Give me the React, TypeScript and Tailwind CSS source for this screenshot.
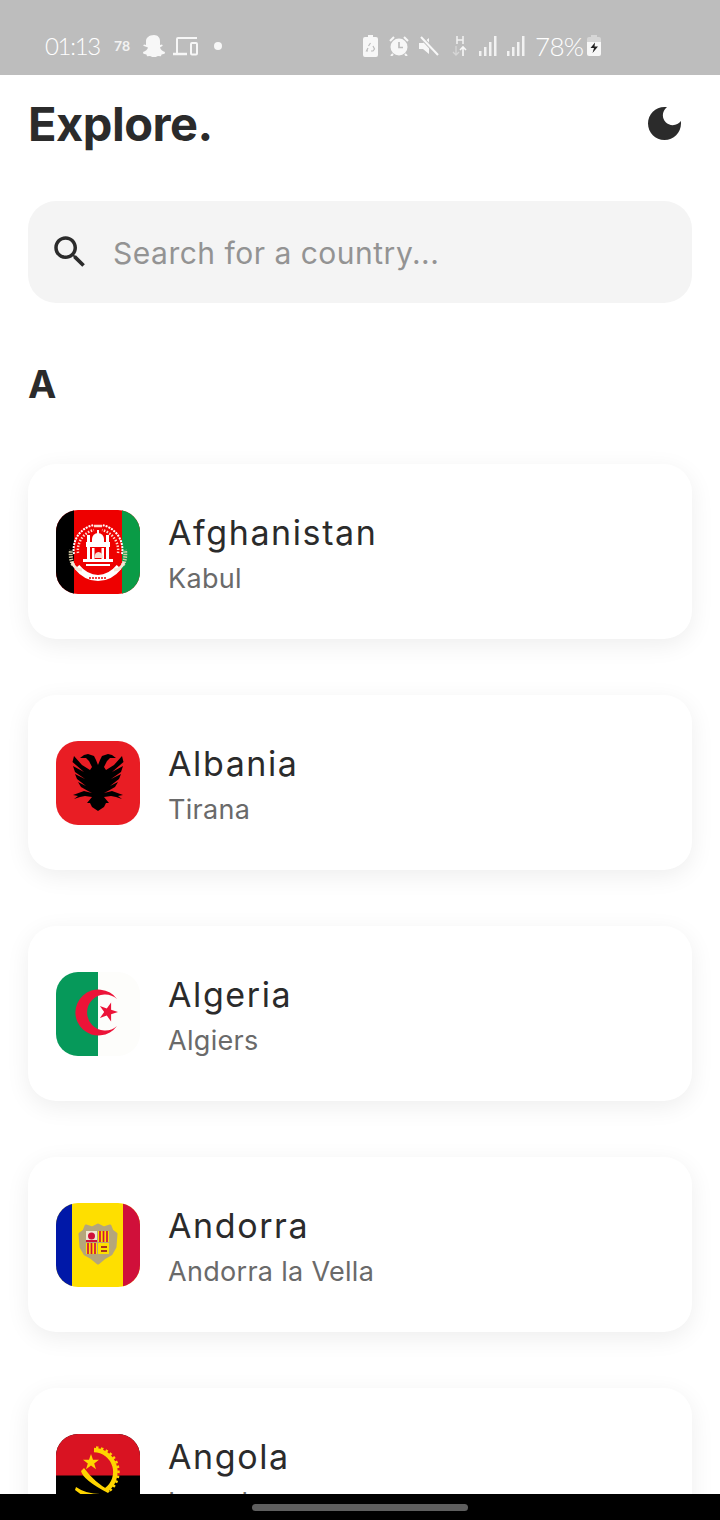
import React from "react";

const INK = "#2b2b2b";

function AfghanFlag() {
  return (
    <svg viewBox="0 0 84 84" className="w-full h-full block">
      <rect width="84" height="84" fill="#ee0000" />
      <rect width="18" height="84" fill="#000" />
      <rect x="66" width="18" height="84" fill="#0a9b46" />
      <g fill="none" strokeLinecap="butt">
        <path d="M17 55A27 27 0 0 1 15 40" strokeWidth="4" stroke="#d8cfa8" strokeDasharray="1.500 1" />
        <path d="M67 55A27 27 0 0 0 69 40" strokeWidth="4" stroke="#d8cfa8" strokeDasharray="1.500 1" />
        <path d="M18 44A25 25 0 0 1 38 15" strokeWidth="2" stroke="#fff" strokeDasharray="2 1" />
        <path d="M66 44A25 25 0 0 0 46 15" strokeWidth="2" stroke="#fff" strokeDasharray="2 1" />
        <path d="M22 43A21 21 0 0 1 38 20" strokeWidth="2.500" stroke="#ffd8cc" strokeDasharray="1.500 1.500" />
        <path d="M62 43A21 21 0 0 0 46 20" strokeWidth="2.500" stroke="#ffd8cc" strokeDasharray="1.500 1.500" />
        <path d="M38 16h8" strokeWidth="2.500" stroke="#ffd8cc" />
        <path d="M21 57Q30 68 42 68T63 57" strokeWidth="6" stroke="#fff" />
        <path d="M33 68h18" strokeWidth="1.300" stroke="#ee0000" strokeDasharray="2 1" />
        <path d="M16 52Q19 60 26 60M68 52Q65 60 58 60" strokeWidth="3" stroke="#f3e7d8" />
      </g>
      <g fill="#fff">
        <rect x="31" y="25" width="3" height="24" />
        <rect x="50" y="25" width="3" height="24" />
        <path d="M36 32v-3a6 6 0 0 1 12 0v3z" />
        <rect x="30" y="32" width="24" height="5" />
        <rect x="36" y="38" width="2.500" height="11" />
        <rect x="45.500" y="38" width="2.500" height="11" />
        <rect x="27" y="49" width="30" height="3" />
        <rect x="30" y="54" width="24" height="2" />
        <path d="M38.500 48q0-6 4-6t4.500 6z" fill="#f6dccf" />
      </g>
      <rect x="41" y="20" width="2" height="4" fill="#fff" />
    </svg>
  );
}

function AlbaniaFlag() {
  const half =
    "M42 24L44 19L46 15L52 13L56 14L60 17L54 17L51 20L48 26L50 29L58 24L66 15L67.500 21L56 31L67 25L65 31L55 38L65 33L63 38L54 45L62 41L59 46L52 50L48 52L56 50L67 54L62 55L66 58L60 56L55 55L48 56L53 62L50 62L48 66L42 70Z";
  return (
    <svg viewBox="0 0 84 84" className="w-full h-full block">
      <rect width="84" height="84" fill="#e91d24" />
      <path d={half} fill="#000" />
      <path d={half} fill="#000" transform="matrix(-1 0 0 1 84 0)" />
    </svg>
  );
}

function AlgeriaFlag() {
  return (
    <svg viewBox="0 0 84 84" className="w-full h-full block">
      <rect width="84" height="84" fill="#fdfdfb" />
      <rect width="42" height="84" fill="#06995a" />
      <path d="M61 27A23 23 0 1 0 61 54A18 18 0 1 1 61 27Z" fill="#ec1338" />
      <path d="M62 40L55.100 42.200L55.100 49.500L50.800 43.600L43.900 45.900L48.200 40L43.900 34.100L50.800 36.400L55.100 30.500L55.100 37.800Z" fill="#ec1338" />
    </svg>
  );
}

function AndorraFlag() {
  return (
    <svg viewBox="0 0 84 84" className="w-full h-full block">
      <rect width="84" height="84" fill="#fedf00" />
      <rect width="16" height="84" fill="#0018a8" />
      <rect x="67" width="17" height="84" fill="#d0103a" />
      <path
        d="M30 23L36 25L42 22L48 25L54 23L56 28L60 31L59 44L55 51L48 55L42 60L36 55L29 51L25 44L24 31L28 28Z"
        fill="#b5a67a"
        stroke="#b5a67a"
        strokeWidth="3"
        strokeLinejoin="round"
      />
      <rect x="30" y="28" width="11" height="11" fill="#efe8d2" />
      <circle cx="35.500" cy="33" r="3.500" fill="#d0103a" />
      <rect x="30" y="37" width="11" height="2" fill="#d0103a" />
      <rect x="42" y="28" width="11" height="11" fill="#fedf00" />
      <path d="M44 28v11M47.500 28v11M51 28v11" stroke="#d0103a" strokeWidth="1.700" />
      <rect x="30" y="40" width="11" height="11" fill="#fedf00" />
      <path d="M32 40v11M35.500 40v11M39 40v11" stroke="#d0103a" strokeWidth="1.700" />
      <rect x="42" y="40" width="11" height="11" fill="#fedf00" />
      <path d="M45 43h6v2h-6zM45 47h6v2h-6z" fill="#a8341c" />
    </svg>
  );
}

function AngolaFlag() {
  return (
    <svg viewBox="0 0 84 84" className="w-full h-full block">
      <rect width="84" height="84" fill="#000" />
      <rect width="84" height="41.500" fill="#d91322" />
      <path d="M35 20L37 25.800L43 25.800L38.200 29.400L40 35.200L35 31.600L30 35.200L31.800 29.400L27 25.800L33 25.800Z" fill="#ffd500" />
      <path d="M38 16A22 22 0 0 1 50 56" fill="none" stroke="#ffd500" strokeWidth="4.500" />
      <path d="M40 13.500A24.500 24.500 0 0 1 52 58" fill="none" stroke="#ffd500" strokeWidth="2.500" strokeDasharray="2.500 2.500" />
      <path d="M25 37Q27 46 52 59L54 57Q38 48 28 34Z" fill="#ffd500" />
      <path d="M20 53Q30 60 44 60L48 66Q30 66 19 56Z" fill="#ffd500" />
    </svg>
  );
}

const COUNTRIES = [
  { name: "Afghanistan", capital: "Kabul", Flag: AfghanFlag },
  { name: "Albania", capital: "Tirana", Flag: AlbaniaFlag },
  { name: "Algeria", capital: "Algiers", Flag: AlgeriaFlag },
  { name: "Andorra", capital: "Andorra la Vella", Flag: AndorraFlag },
  { name: "Angola", capital: "Luanda", Flag: AngolaFlag },
];

function StatusBar() {
  return (
    <div className="h-[75px] bg-[#bdbdbd] flex items-center justify-between pl-[45px] pr-[119px] pt-[16px] text-white shrink-0 [font-family:Lato,sans-serif]">
      <div className="flex items-center">
        <span className="text-[24px] font-light w-[55px] leading-none tracking-[-1.300px]">01:13</span>
        <span className="text-[14px] font-bold ml-[14px] w-[16px] leading-none text-[#f2f2f2]">78</span>
        <svg viewBox="0 0 22 22" className="w-[22px] h-[22px] ml-[13px]" fill="#f7f7f7">
          <path d="M11 0c4 0 6 3 6 6v4l2-.5.8 1.300-2.800 1.600c.6 2 2.400 3.800 5 4.600l-.4 1.800-3 .7-.7 1.700-3-.3c-1.300.4-2.400 1.600-3.900 1.600s-2.600-1.200-3.900-1.600l-3 .3-.7-1.700-3-.7-.4-1.800c2.600-.8 4.400-2.600 5-4.600L.2 10.800 1 9.500l2 .5V6c0-3 3-6 8-6z" />
        </svg>
        <svg viewBox="0 0 25 20" className="w-[25px] h-[20px] ml-[8px]" fill="none" stroke="#f7f7f7" strokeWidth="2">
          <path d="M24 2H5a1 1 0 0 0-1 1v14" />
          <path d="M0 18h14" strokeWidth="2.500" />
          <rect x="18" y="7" width="6" height="11.500" rx="1" />
        </svg>
        <span className="w-[8px] h-[8px] rounded-full bg-[#f7f7f7] ml-[16px]" />
      </div>
      <div className="flex items-center">
        <svg viewBox="0 0 15 22" className="w-[15px] h-[22px]">
          <path d="M5 0h5v2h3a2 2 0 0 1 2 2v16a2 2 0 0 1-2 2H2a2 2 0 0 1-2-2V4a2 2 0 0 1 2-2h3z" fill="#f7f7f7" />
          <path d="M7.500 8l-2 3M10 11l1.500 3-1.500 2H8M5 16H3.500L5 13" fill="none" stroke="#bdbdbd" strokeWidth="1.200" />
        </svg>
        <svg viewBox="0 0 20 20" className="w-[20px] h-[20px] ml-[11px]">
          <circle cx="10" cy="11" r="8.500" fill="#f7f7f7" />
          <path d="M1 5l4-4M19 5l-4-4M4 18l-2 2M16 18l2 2" stroke="#f7f7f7" strokeWidth="2" />
          <path d="M10 6v5.500h4" fill="none" stroke="#bdbdbd" strokeWidth="1.700" />
        </svg>
        <svg viewBox="0 0 20 20" className="w-[20px] h-[20px] ml-[10px]">
          <path d="M0 7h4l6-5v16l-6-5H0z" fill="#f7f7f7" />
          <path d="M2 1l17 18" stroke="#bdbdbd" strokeWidth="4" />
          <path d="M2 1l17 18" stroke="#f7f7f7" strokeWidth="2" />
        </svg>
        <svg viewBox="0 0 16 20" className="w-[16px] h-[20px] ml-[13px]" fill="none" strokeWidth="1.300">
          <path d="M5 0v8M11 0v8M5 4h6" stroke="#f2f2f2" strokeWidth="1.500" />
          <path d="M4 10v9M1 16l3 3 3-3" stroke="#d6d6d6" />
          <path d="M11 20v-9M8 14l3-3 3 3" stroke="#f7f7f7" strokeWidth="1.600" />
        </svg>
        <svg viewBox="0 0 18 20" className="w-[18px] h-[20px] ml-[11px]" fill="#f2f2f2">
          <rect x="0" y="15" width="2.500" height="5" />
          <rect x="5" y="11" width="2.500" height="9" />
          <rect x="10" y="6" width="2.500" height="14" />
          <rect x="15" y="0" width="2.500" height="20" />
        </svg>
        <svg viewBox="0 0 18 20" className="w-[18px] h-[20px] ml-[10px]" fill="#f2f2f2">
          <rect x="0" y="15" width="2.500" height="5" />
          <rect x="5" y="11" width="2.500" height="9" />
          <rect x="10" y="6" width="2.500" height="14" />
          <rect x="15" y="0" width="2.500" height="20" />
        </svg>
        <span className="text-[26px] font-light ml-[10px] w-[47px] leading-none whitespace-nowrap tracking-[-0.7px]">78%</span>
        <svg viewBox="0 0 14 21" className="w-[14px] h-[21px] ml-[5px]">
          <path d="M4 0h6v2H4z" fill="#d6d6d6" />
          <path d="M2 2h10a2 2 0 0 1 2 2v4H0V4a2 2 0 0 1 2-2z" fill="#d6d6d6" />
          <path d="M0 7h14v12a2 2 0 0 1-2 2H2a2 2 0 0 1-2-2z" fill="#f7f7f7" />
          <path d="M8 7.500L3.500 13H7l-1.500 5L11 11.500H7.500z" fill="#222" />
        </svg>
      </div>
    </div>
  );
}

export default function App() {
  return (
    <div className="relative w-[720px] h-[1520px] overflow-hidden bg-white flex flex-col [font-family:Inter,sans-serif]" style={{ color: INK }}>
      <StatusBar />
      <div className="h-[98px] flex items-center justify-between pl-[28px] pr-[39px] pb-[2px] shrink-0">
        <h1 className="text-[47px] font-bold leading-none tracking-[-0.5px]">Explore.</h1>
        <svg viewBox="3 3 18 18" className="w-[33px] h-[33px]" fill="#2b2b2b">
          <path d="M12 3c-4.970 0-9 4.030-9 9s4.030 9 9 9 9-4.030 9-9c0-.46-.04-.92-.1-1.360-.98 1.370-2.580 2.260-4.400 2.260-2.980 0-5.400-2.420-5.400-5.400 0-1.810.89-3.420 2.260-4.400-.44-.06-.9-.1-1.360-.1z" />
        </svg>
      </div>
      <div className="px-[28px] pt-[28px] flex flex-col shrink-0">
        <div className="h-[102px] rounded-[28px] bg-[#f4f4f4] flex items-center pl-[21px]">
          <svg viewBox="0 0 24 24" className="w-[42px] h-[42px] shrink-0" fill="#2b2b2b">
            <path d="M15.500 14h-.79l-.28-.27C15.410 12.590 16 11.110 16 9.500 16 5.910 13.090 3 9.500 3S3 5.910 3 9.500 5.910 16 9.500 16c1.610 0 3.090-.59 4.230-1.570l.27.28v.79l5 4.990L20.490 19l-4.990-5zm-6 0C7.010 14 5 11.990 5 9.500S7.010 5 9.500 5 14 7.010 14 9.500 11.990 14 9.500 14z" />
          </svg>
          <span className="ml-[22px] text-[30px] text-[#939393] leading-none tracking-[0.5px] pt-[1px]">Search for a country...</span>
        </div>
        <div className="mt-[59px] text-[38px] font-bold leading-none h-[44px] flex items-center">A</div>
        <div className="mt-[58px] flex flex-col gap-[56px]">
          {COUNTRIES.map(({ name, capital, Flag }) => (
            <div key={name} className="h-[175px] shrink-0 rounded-[28px] bg-white flex items-center pl-[28px] shadow-[0_6px_24px_rgba(0,0,0,0.07)]">
              <div className="w-[84px] h-[84px] rounded-[22px] overflow-hidden shrink-0">
                <Flag />
              </div>
              <div className="ml-[28px] flex flex-col pt-[6px]">
                <div className="text-[34px] font-normal leading-[41px] tracking-[1.600px] -mt-[2px]">{name}</div>
                <div className="text-[27px] text-[#6a6a6a] leading-[33px] mt-[9px] tracking-[0.3px]">{capital}</div>
              </div>
            </div>
          ))}
        </div>
      </div>
      <div className="absolute left-0 right-0 bottom-0 h-[26px] bg-black flex items-center justify-center">
        <div className="w-[216px] h-[7px] rounded-full bg-[#5e5e5e]" />
      </div>
    </div>
  );
}
